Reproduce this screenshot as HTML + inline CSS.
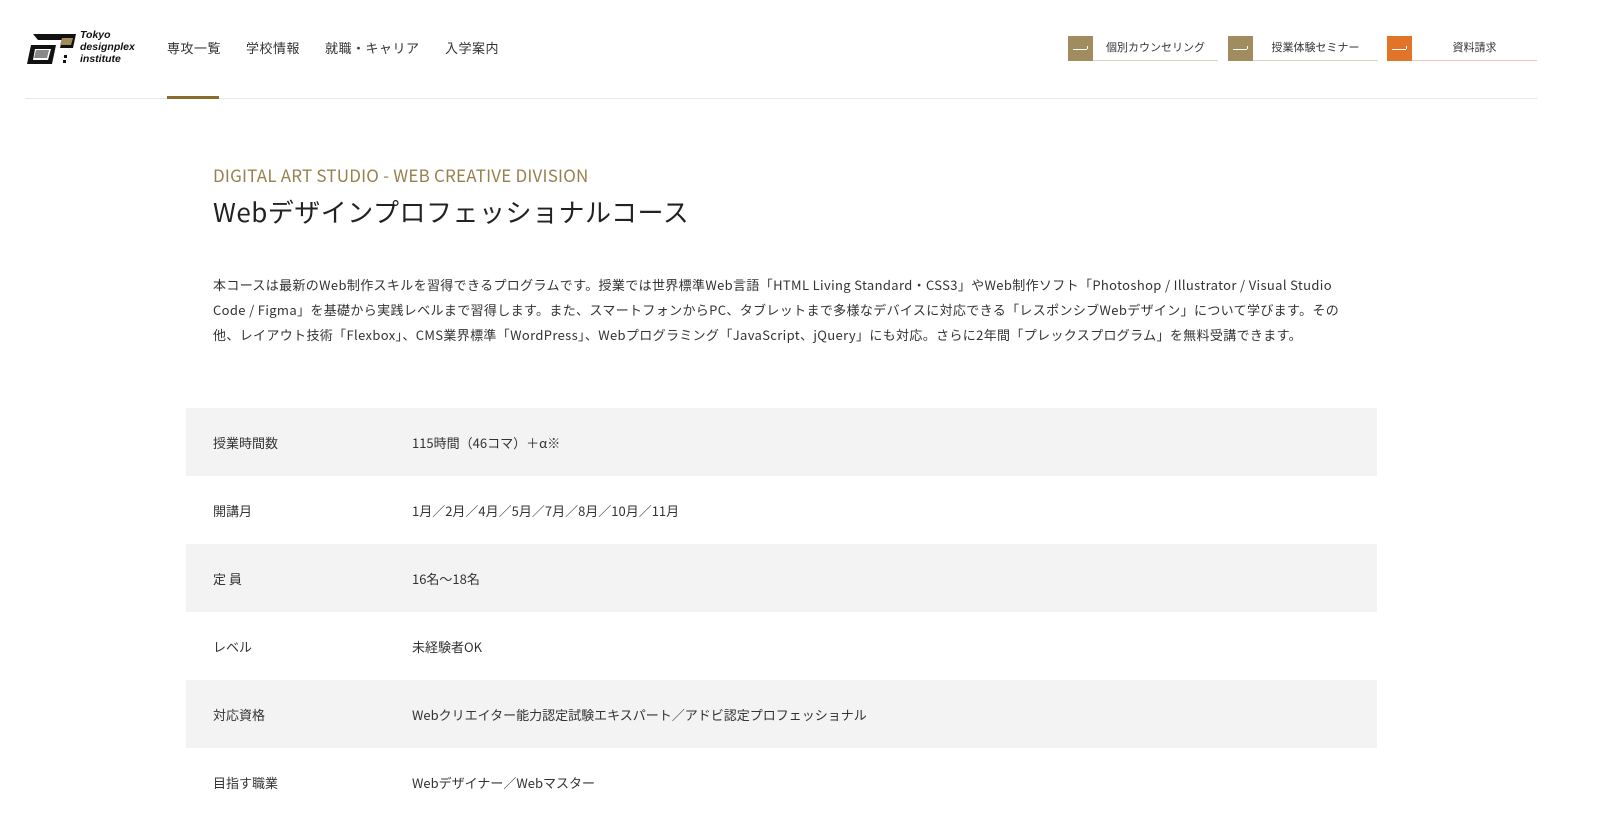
<!DOCTYPE html>
<html><head><meta charset="utf-8"><style>
*{margin:0;padding:0;box-sizing:border-box}
body{width:1600px;height:804px;overflow:hidden;background:#fff;font-family:"Noto Sans CJK JP","Liberation Sans",sans-serif;color:#222}
.hdr{position:absolute;left:25px;top:0;width:1512px;height:99px;border-bottom:1px solid #e6e6e6}
.nav{position:absolute;top:38px;font-size:13px;color:#333;letter-spacing:.5px}
.ul{position:absolute;left:167px;top:96px;width:52px;height:3px;background:#8a6d2e}
.btn{position:absolute;top:36px;height:25px;border-bottom:1px solid #d9d2c2;font-size:11px;color:#333}
.btn .sq{position:absolute;left:0;top:0;width:25px;height:25px;background:#a08c5e}
.btn .sq:after{content:"";position:absolute;left:5px;top:13px;width:14px;height:1px;background:#fff}
.btn .sq:before{content:"";position:absolute;left:16px;top:10px;width:3px;height:3px;border-right:1px solid #fff}
.btn span{position:absolute;top:3px;left:25px;right:0;text-align:center}
.sub{position:absolute;left:213px;top:162px;font-size:17px;color:#98804e;letter-spacing:.2px}
h1{position:absolute;left:213px;top:193px;font-size:26px;font-weight:normal;color:#222;letter-spacing:.5px}
.desc{position:absolute;left:213px;top:272px;width:1140px;font-size:13px;line-height:25px;color:#333;letter-spacing:.35px}
table{position:absolute;left:186px;top:408px;width:1191px;border-collapse:collapse;font-size:13px;color:#333}
td{height:68px;vertical-align:middle}
td:first-child{padding-left:27px;width:226px}
tr:nth-child(odd){background:#f3f3f3}
</style></head><body>
<div class="hdr"></div>
<svg style="position:absolute;left:24px;top:31px" width="56" height="36" viewBox="0 0 56 36">
<path d="M9 3H52L49 17H36L38 9H14Z" fill="#111"/>
<path d="M38 7H49L47 14H36Z" fill="#a08c5e"/>
<path d="M3 33L7 14H32L28 33ZM9 29H24L27 18H11Z" fill="#111" fill-rule="evenodd"/>
<path d="M12 19H25L23 27H10Z" fill="#888"/>
<rect x="40" y="24" width="3" height="3" fill="#111"/><rect x="39" y="29" width="3" height="3" fill="#111"/>
</svg>
<div style="position:absolute;left:80px;top:29px;font-family:'Liberation Sans',sans-serif;font-size:10.5px;line-height:12px;font-style:italic;font-weight:bold;color:#111">Tokyo<br>designplex<br>institute</div>
<div class="nav" style="left:167px">専攻一覧</div>
<div class="nav" style="left:246px">学校情報</div>
<div class="nav" style="left:325px">就職・キャリア</div>
<div class="nav" style="left:445px">入学案内</div>
<div class="ul"></div>
<div class="btn" style="left:1068px;width:150px"><div class="sq"></div><span>個別カウンセリング</span></div>
<div class="btn" style="left:1228px;width:150px"><div class="sq"></div><span>授業体験セミナー</span></div>
<div class="btn" style="left:1387px;width:150px;border-color:#f0c8b4"><div class="sq" style="background:#e07428"></div><span>資料請求</span></div>
<div class="sub">DIGITAL ART STUDIO - WEB CREATIVE DIVISION</div>
<h1>Webデザインプロフェッショナルコース</h1>
<div class="desc">本コースは最新のWeb制作スキルを習得できるプログラムです。授業では世界標準Web言語「HTML Living Standard・CSS3」やWeb制作ソフト「Photoshop / Illustrator / Visual Studio Code / Figma」を基礎から実践レベルまで習得します。また、スマートフォンからPC、タブレットまで多様なデバイスに対応できる「レスポンシブWebデザイン」について学びます。その他、レイアウト技術「Flexbox」、CMS業界標準「WordPress」、Webプログラミング「JavaScript、jQuery」にも対応。さらに2年間「プレックスプログラム」を無料受講できます。</div>
<table>
<tr><td>授業時間数</td><td>115時間（46コマ）＋α※</td></tr>
<tr><td>開講月</td><td>1月／2月／4月／5月／7月／8月／10月／11月</td></tr>
<tr><td>定 員</td><td>16名～18名</td></tr>
<tr><td>レベル</td><td>未経験者OK</td></tr>
<tr><td>対応資格</td><td>Webクリエイター能力認定試験エキスパート／アドビ認定プロフェッショナル</td></tr>
<tr><td>目指す職業</td><td>Webデザイナー／Webマスター</td></tr>
</table>
</body></html>
